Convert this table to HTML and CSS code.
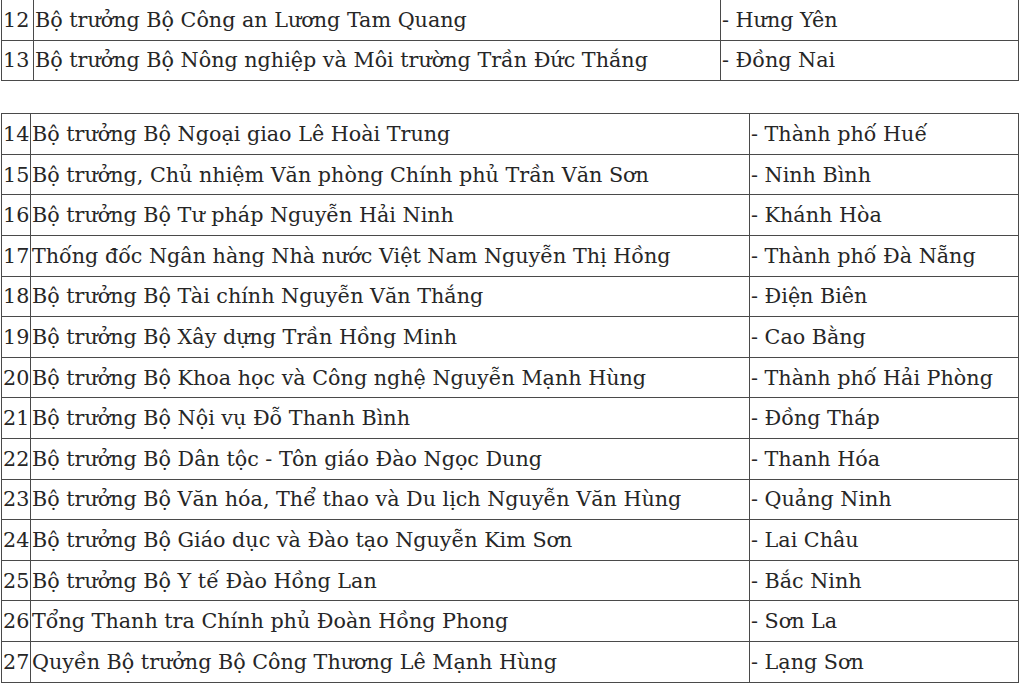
FILE: index.html
```html
<!DOCTYPE html>
<html lang="vi">
<head>
<meta charset="utf-8">
<link rel="stylesheet" href="styles.css">
</head>
<body>
<table class="tbl tbl-a">
  <colgroup><col class="c1"><col class="c2"><col class="c3"></colgroup>
  <tr><td>12</td><td>Bộ trưởng Bộ Công an Lương Tam Quang</td><td>- Hưng Yên</td></tr>
  <tr><td>13</td><td>Bộ trưởng Bộ Nông nghiệp và Môi trường Trần Đức Thắng</td><td>- Đồng Nai</td></tr>
</table>
<table class="tbl tbl-b">
  <colgroup><col class="c1"><col class="c2"><col class="c3"></colgroup>
  <tr><td>14</td><td>Bộ trưởng Bộ Ngoại giao Lê Hoài Trung</td><td>- Thành phố Huế</td></tr>
  <tr><td>15</td><td>Bộ trưởng, Chủ nhiệm Văn phòng Chính phủ Trần Văn Sơn</td><td>- Ninh Bình</td></tr>
  <tr><td>16</td><td>Bộ trưởng Bộ Tư pháp Nguyễn Hải Ninh</td><td>- Khánh Hòa</td></tr>
  <tr><td>17</td><td>Thống đốc Ngân hàng Nhà nước Việt Nam Nguyễn Thị Hồng</td><td>- Thành phố Đà Nẵng</td></tr>
  <tr><td>18</td><td>Bộ trưởng Bộ Tài chính Nguyễn Văn Thắng</td><td>- Điện Biên</td></tr>
  <tr><td>19</td><td>Bộ trưởng Bộ Xây dựng Trần Hồng Minh</td><td>- Cao Bằng</td></tr>
  <tr><td>20</td><td>Bộ trưởng Bộ Khoa học và Công nghệ Nguyễn Mạnh Hùng</td><td>- Thành phố Hải Phòng</td></tr>
  <tr><td>21</td><td>Bộ trưởng Bộ Nội vụ Đỗ Thanh Bình</td><td>- Đồng Tháp</td></tr>
  <tr><td>22</td><td>Bộ trưởng Bộ Dân tộc - Tôn giáo Đào Ngọc Dung</td><td>- Thanh Hóa</td></tr>
  <tr><td>23</td><td>Bộ trưởng Bộ Văn hóa, Thể thao và Du lịch Nguyễn Văn Hùng</td><td>- Quảng Ninh</td></tr>
  <tr><td>24</td><td>Bộ trưởng Bộ Giáo dục và Đào tạo Nguyễn Kim Sơn</td><td>- Lai Châu</td></tr>
  <tr><td>25</td><td>Bộ trưởng Bộ Y tế Đào Hồng Lan</td><td>- Bắc Ninh</td></tr>
  <tr><td>26</td><td>Tổng Thanh tra Chính phủ Đoàn Hồng Phong</td><td>- Sơn La</td></tr>
  <tr><td>27</td><td>Quyền Bộ trưởng Bộ Công Thương Lê Mạnh Hùng</td><td>- Lạng Sơn</td></tr>
</table>
</body>
</html>
```
FILE: styles.css
```css
html, body {
  margin: 0;
  padding: 0;
  background: #ffffff;
}
body {
  font-family: "DejaVu Serif", "Liberation Serif", serif;
  font-size: 20.7px;
  color: #262626;
}
.tbl {
  border-collapse: collapse;
  table-layout: fixed;
  width: 1018px;
  margin-left: 1px;
}
.tbl td {
  border: 1.5px solid #4a4a4a;
  padding: 0 0 0 1px;
  height: 40.6px;
  box-sizing: border-box;
  white-space: nowrap;
  overflow: hidden;
  vertical-align: middle;
}
.tbl-a {
  margin-top: -1px;
}
.tbl-a .c1 { width: 32px; }
.tbl-a .c2 { width: 687px; }
.tbl-b {
  margin-top: 32px;
}
.tbl-b .c1 { width: 29px; }
.tbl-b .c2 { width: 719px; }
```
